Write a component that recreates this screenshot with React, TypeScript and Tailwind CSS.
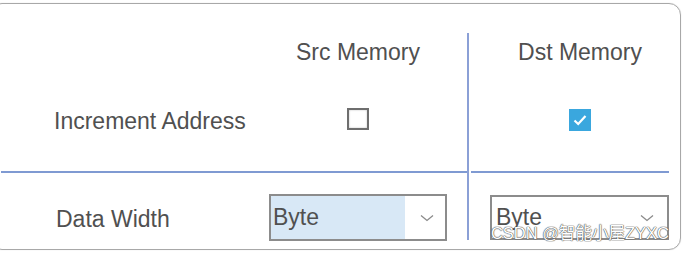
import React from "react";

const font = { fontFamily: '"Liberation Sans", Arial, "Noto Sans CJK SC", sans-serif' };

function Chevron() {
    return (
        <svg width="14" height="8" viewBox="0 0 14 8" fill="none">
            <path d="M1 1.5 L7 6.5 L13 1.5" stroke="#8a8a8a" strokeWidth="1.3" />
        </svg>
    );
}

function Checkbox({ checked }: { checked: boolean }) {
    if (checked) {
        return (
            <div className="w-[22px] h-[22px] bg-[#3aa7de] flex items-center justify-center">
                <svg width="16" height="14" viewBox="0 0 16 14" fill="none">
                    <path d="M2.5 7.5 L6.2 11 L13.5 3" stroke="white" strokeWidth="2.2" />
                </svg>
            </div>
        );
    }
    return <div className="w-[22px] h-[22px] border-2 border-[#6e6e6e] bg-white shadow-[inset_0_0_2px_#bbb]" />;
}

export default function App() {
    return (
        <div className="w-[683px] h-[253px] bg-white overflow-hidden text-[#505050]" style={font}>
            <div className="relative -ml-[10px] mt-[3px] w-[691px] h-[247px] border border-[#a8a8a8] rounded-[12px] pl-[10px] pt-[29px] shadow-[0_0_1px_#ccc]">
                <div className="grid grid-cols-[248px_218px_2px_213px] grid-rows-[138px_2px_67px]">
                    {/* header + checkbox row */}
                    <div className="row-start-1 col-start-1 flex flex-col">
                        <div className="h-[74px]" />
                        <p className="pl-[53px] text-[23px] leading-[28px] whitespace-nowrap">Increment Address</p>
                    </div>
                    <div className="row-start-1 col-start-2 flex flex-col items-center">
                        <p className="mt-[5px] text-[23px] leading-[28px] whitespace-nowrap">Src Memory</p>
                        <div className="mt-[42px]">
                            <Checkbox checked={false} />
                        </div>
                    </div>
                    <div className="row-start-1 row-end-4 col-start-3 bg-[#8ba0d6]" />
                    <div className="row-start-1 col-start-4 flex flex-col items-center pl-[9px]">
                        <p className="mt-[5px] text-[23px] leading-[28px] whitespace-nowrap">Dst Memory</p>
                        <div className="mt-[43px]">
                            <Checkbox checked={true} />
                        </div>
                    </div>

                    {/* divider */}
                    <div className="row-start-2 col-start-1 col-end-3 bg-[#7f9ad2]" />
                    <div className="row-start-2 col-start-4 pl-[2px] pr-[13px]">
                        <div className="h-[2px] bg-[#7f9ad2]" />
                    </div>

                    {/* data width row */}
                    <div className="row-start-3 col-start-1">
                        <p className="pl-[55px] mt-[32px] text-[23px] leading-[28px] whitespace-nowrap">Data Width</p>
                    </div>
                    <div className="row-start-3 col-start-2 pl-[20px]">
                        <div className="mt-[21px] w-[178px] h-[47px] border-2 border-[#8c8c8c] flex bg-white">
                            <div className="w-[134px] bg-[#d8e8f6] flex items-center pl-[2px] text-[23px]">Byte</div>
                            <div className="flex-1 flex items-center justify-center pl-[4px]">
                                <Chevron />
                            </div>
                        </div>
                    </div>
                    <div className="row-start-3 col-start-4 pl-[21px] relative">
                        <div className="mt-[22px] w-[179px] h-[45px] border-2 border-[#8c8c8c] flex items-center bg-white">
                            <div className="flex-1 pl-[4px] text-[23px]">Byte</div>
                            <div className="w-[40px] flex justify-center">
                                <Chevron />
                            </div>
                        </div>
                        <span className="absolute right-[13px] top-[51px] text-[16.5px] leading-[18px] text-white whitespace-nowrap [text-shadow:0_0_1px_#555,0_0_1px_#555,0_0_1px_#555]">
                            CSDN @智能小屋ZYXC
                        </span>
                    </div>
                </div>
            </div>
        </div>
    );
}
